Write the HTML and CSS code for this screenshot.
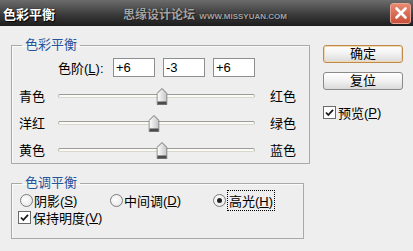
FILE: index.html
```html
<!DOCTYPE html>
<html lang="zh-CN">
<head>
    <meta charset="UTF-8">
    <title>色彩平衡</title>
    <link rel="stylesheet" href="styles.css">
</head>
<body>
    <div class="titlebar">
        <span class="title">色彩平衡</span>
        <span class="watermark">思缘设计论坛 <small>WWW.MISSYUAN.COM</small></span>
        <span class="close">
            <svg width="14" height="14" viewBox="0 0 14 14"><path d="M2.5 2.5l9 9M11.5 2.5l-9 9" stroke="#fff" stroke-width="2.6" stroke-linecap="round"/></svg>
        </span>
    </div>

    <div class="dialog">
        <div class="left">
            <fieldset class="group">
                <legend>色彩平衡</legend>
                <div class="levels">
                    <span class="levels-label">色阶(<u>L</u>):</span>
                    <span class="field">+6</span>
                    <span class="field">-3</span>
                    <span class="field">+6</span>
                </div>

                <div class="sliders">
                    <div class="slider-row">
                        <span class="side">青色</span>
                        <div class="slider">
                            <div class="track"></div>
                            <svg class="thumb" style="left: 53%;" width="11" height="17" viewBox="0 0 11 17">
                                <defs>
                                    <linearGradient id="thumbFill" x1="0" y1="0" x2="1" y2="0">
                                        <stop offset="0" stop-color="#ffffff"/>
                                        <stop offset="1" stop-color="#c4c4c4"/>
                                    </linearGradient>
                                </defs>
                                <path d="M.5 16.5V5.5L5.5.5l5 5v11z" fill="url(#thumbFill)" stroke="#707070"/>
                                <rect x="1" y="13.5" width="9" height="2.5" fill="#4b4b4b"/>
                            </svg>
                        </div>
                        <span class="side">红色</span>
                    </div>
                    <div class="slider-row">
                        <span class="side">洋红</span>
                        <div class="slider">
                            <div class="track"></div>
                            <svg class="thumb" style="left: 48.5%;" width="11" height="17" viewBox="0 0 11 17">
                                <path d="M.5 16.5V5.5L5.5.5l5 5v11z" fill="url(#thumbFill)" stroke="#707070"/>
                                <rect x="1" y="13.5" width="9" height="2.5" fill="#4b4b4b"/>
                            </svg>
                        </div>
                        <span class="side">绿色</span>
                    </div>
                    <div class="slider-row">
                        <span class="side">黄色</span>
                        <div class="slider">
                            <div class="track"></div>
                            <svg class="thumb" style="left: 53%;" width="11" height="17" viewBox="0 0 11 17">
                                <path d="M.5 16.5V5.5L5.5.5l5 5v11z" fill="url(#thumbFill)" stroke="#707070"/>
                                <rect x="1" y="13.5" width="9" height="2.5" fill="#4b4b4b"/>
                            </svg>
                        </div>
                        <span class="side">蓝色</span>
                    </div>
                </div>
            </fieldset>

            <fieldset class="group tone">
                <legend>色调平衡</legend>
                <div class="radios">
                    <label class="option"><span class="radio"></span>阴影(<u>S</u>)</label>
                    <label class="option"><span class="radio"></span>中间调(<u>D</u>)</label>
                    <label class="option"><span class="radio checked"><span class="dot"></span></span><span class="focus">高光(<u>H</u>)</span></label>
                </div>
                <label class="option check-row">
                    <svg class="checkbox" width="13" height="13" viewBox="0 0 13 13"><rect x=".5" y=".5" width="12" height="12" fill="#fff" stroke="#6a6a6a"/><path d="M3 6.5l2.3 2.5L10 3.8" fill="none" stroke="#1a1a1a" stroke-width="1.8"/></svg>
                    保持明度(<u>V</u>)
                </label>
            </fieldset>
        </div>

        <div class="right">
            <button class="btn default">确定</button>
            <button class="btn">复位</button>
            <label class="option preview">
                <svg class="checkbox" width="13" height="13" viewBox="0 0 13 13"><rect x=".5" y=".5" width="12" height="12" fill="#fff" stroke="#6a6a6a"/><path d="M3 6.5l2.3 2.5L10 3.8" fill="none" stroke="#1a1a1a" stroke-width="1.8"/></svg>
                预览(<u>P</u>)
            </label>
        </div>
    </div>
</body>
</html>
```

FILE: styles.css
```css
body {
    margin: 0;
    width: 413px;
    height: 251px;
    overflow: hidden;
    background-color: #eeeeee;
    font-family: "Liberation Sans", "Noto Sans CJK SC", sans-serif;
    font-size: 13px;
    color: #000;
}
.titlebar {
    height: 26px;
    display: flex;
    align-items: center;
    padding: 0 2px 0 3px;
    background: linear-gradient(#6c6c6c, #3c3c3c 55%, #1c1c1c);
}
.title {
    color: #fff;
    font-weight: bold;
    font-size: 13px;
    text-shadow: 0 0 1px #000, 1px 1px 1px #000;
}
.watermark {
    margin-left: 68px;
    color: #a4a4a4;
    font-weight: bold;
    font-size: 12px;
    text-shadow: 0 0 1px #111, 1px 1px 0 #222;
}
.watermark small {
    font-size: 8px;
    margin-left: 1px;
}
.close {
    margin-left: auto;
    width: 19px;
    height: 19px;
    display: flex;
    align-items: center;
    justify-content: center;
    border: 1px solid #e9a494;
    border-radius: 3px;
    background: linear-gradient(#e88a72, #c9503a);
}
.dialog {
    display: flex;
    padding-left: 11px;
}
.left {
    width: 293px;
}
.group {
    margin: 11px 0 0;
    padding: 0;
    border: 1px solid #a9a9a9;
    box-shadow: inset 1px 1px 0 #fafafa;
}
.group legend {
    margin-left: 10px;
    padding: 0 3px;
    line-height: 16px;
    color: #26549a;
}
.levels {
    display: flex;
    align-items: center;
    margin-top: 5px;
    padding-left: 46px;
    height: 19px;
}
.levels-label {
    width: 55px;
}
.field {
    box-sizing: border-box;
    width: 42px;
    height: 19px;
    margin-right: 8px;
    padding-left: 2px;
    border: 1px solid #8e8e8e;
    background: #fff;
    line-height: 17px;
}
.sliders {
    margin-top: 5px;
}
.slider-row {
    display: flex;
    align-items: center;
    height: 27px;
    padding-left: 7px;
}
.side {
    width: 39px;
}
.slider {
    position: relative;
    width: 197px;
    height: 27px;
    margin-right: 15px;
    display: flex;
    align-items: center;
}
.track {
    width: 100%;
    height: 2px;
    border-top: 1px solid #9c9c9c;
    border-bottom: 1px solid #d8d8d0;
    border-left: 1px solid #b8b8b8;
    border-right: 1px solid #b8b8b8;
    border-radius: 2px;
    background: #fbfbf3;
}
.thumb {
    position: absolute;
    top: 6px;
    transform: translateX(-50%);
}
.tone {
    padding-bottom: 13px;
}
.radios {
    display: grid;
    grid-template-columns: 90px 103px auto;
    height: 18px;
    align-items: center;
    padding-left: 8px;
}
.option {
    display: flex;
    align-items: center;
}
.radio {
    box-sizing: border-box;
    width: 13px;
    height: 13px;
    margin-right: 1px;
    border: 1px solid #7c7c7c;
    border-radius: 50%;
    background: radial-gradient(circle at 40% 40%, #ffffff, #e2e2e2);
    display: grid;
    place-items: center;
}
.dot {
    width: 5px;
    height: 5px;
    border-radius: 50%;
    background: #222;
}
.focus {
    outline: 1px dotted #000;
    outline-offset: 0;
    padding: 0 1px;
    margin-left: 1px;
}
.check-row {
    height: 15px;
    margin-top: 1px;
    padding-left: 6px;
}
.checkbox {
    margin-right: 2px;
}
.right {
    display: flex;
    flex-direction: column;
    align-items: flex-start;
    margin-left: 19px;
    padding-top: 19px;
}
.btn {
    box-sizing: border-box;
    width: 80px;
    height: 18px;
    margin-bottom: 9px;
    padding: 0;
    border: 1px solid #8a8a8a;
    border-radius: 3px;
    background: linear-gradient(#ffffff, #f1f1f1 50%, #d9d9d9);
    font-family: "Liberation Sans", "Noto Sans CJK SC", sans-serif;
    font-size: 13px;
    line-height: 16px;
    color: #000;
}
.btn.default {
    border-color: #c08a4c;
    box-shadow: inset 0 0 0 1px #f2d8b0;
}
.preview {
    margin-top: 5px;
    height: 16px;
}
```
